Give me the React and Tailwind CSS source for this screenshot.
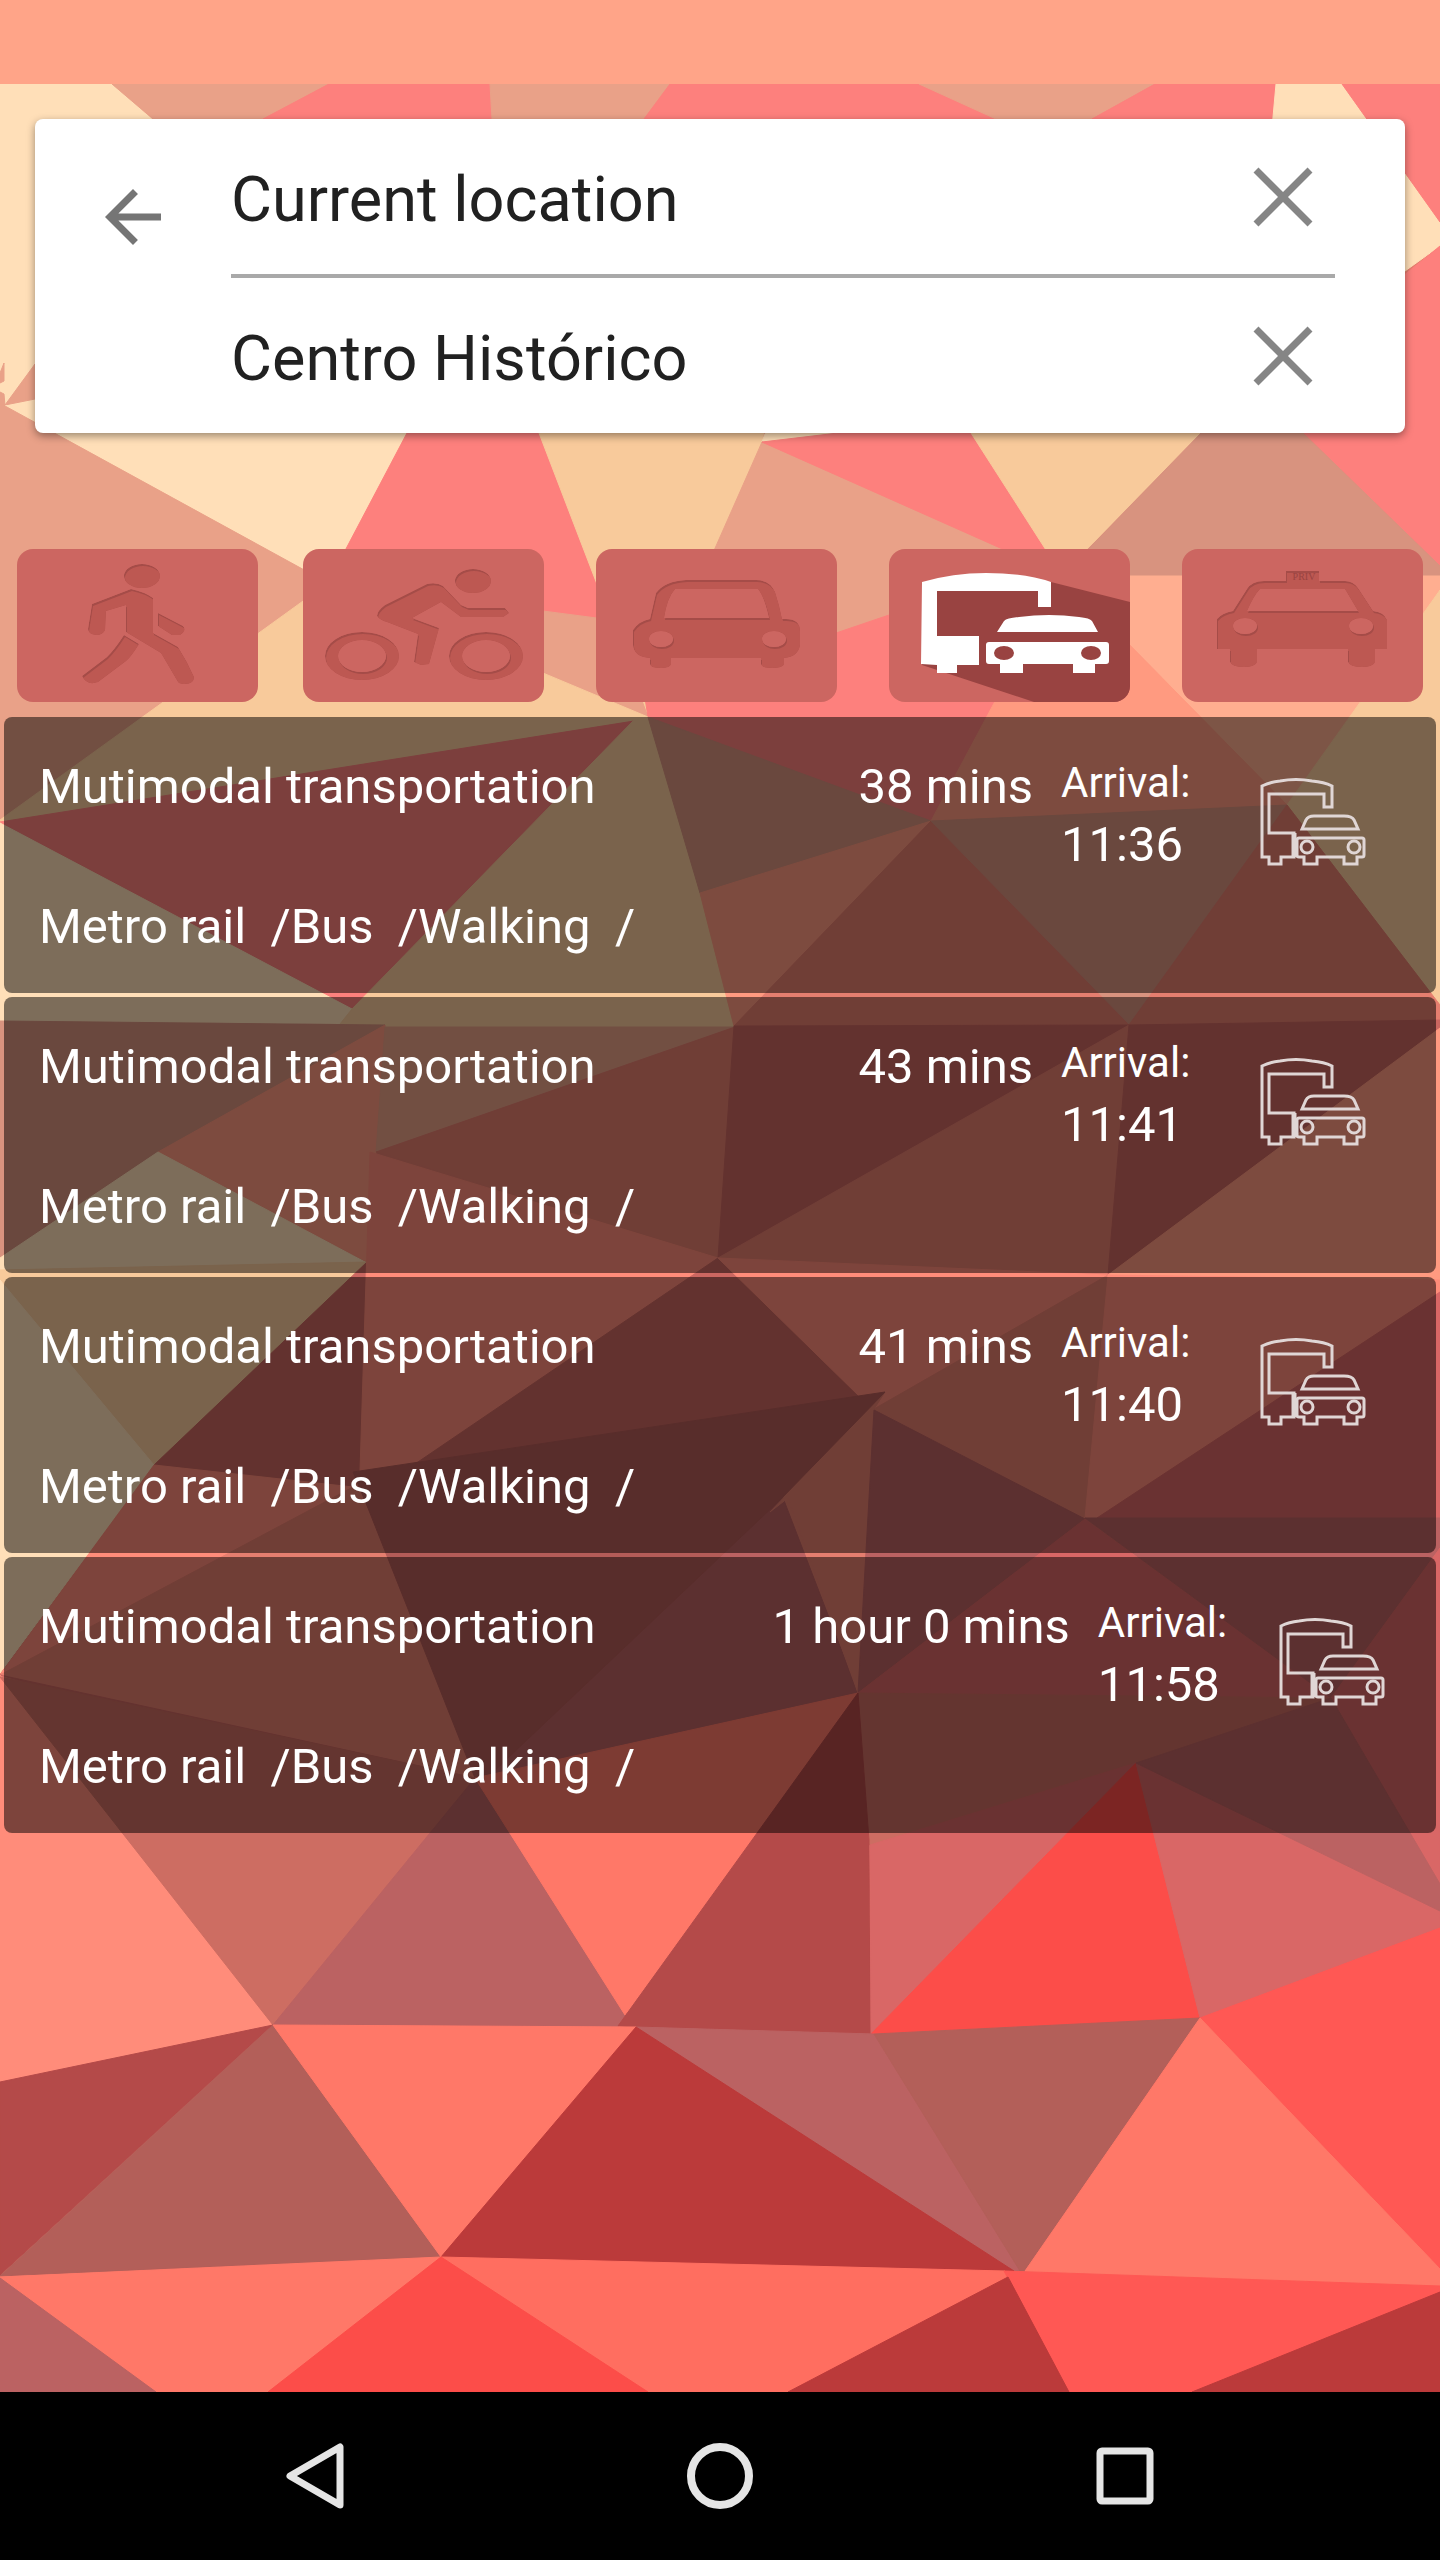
import { useId, useState } from "react"

// Each facet is a colour and its corner points on a 1440 x 2308 canvas that starts at y = 84
const facets = [
	["#ffdfb8", "0,84 112,84 340,280 240,433 0,433"],
	["#e9a188", "112,84 329,84 263,119 153,119"],
	["#fd807d", "329,84 490,84 492,119 263,119"],
	["#e9a188", "490,84 670,84 644,119 492,119"],
	["#fd807d", "670,84 919,84 996,119 644,119"],
	["#e9a188", "919,84 1155,84 1092,119 996,119"],
	["#fd807d", "1155,84 1276,84 1272,119 1092,119"],
	["#ffdfb8", "1276,84 1342,84 1440,222 1440,246 1405,271 1270,150"],
	["#fd807d", "1342,84 1440,84 1440,222"],
	["#fd807d", "1440,246 1440,566 1303,433 1300,360"],
	["#e9a188", "0,373 4,363 4,381 0,383"],
	["#e9a188", "0,392 4,394 5,406 0,420"],
	["#e9a188", "5,405 35,364 35,399"],
	["#ffdfb8", "5,406 60,400 420,400 407,433 328,583"],
	["#e9a188", "0,404 5,406 328,583 0,820"],
	["#fd807d", "407,433 420,400 530,400 539,433 612,620 328,583"],
	["#f8ca9b", "539,433 530,400 770,400 762,442 648,717"],
	["#ffdfb8", "762,442 770,420 860,425 838,433"],
	["#e9a188", "328,583 612,620 648,717"],
	["#f8ca9b", "328,583 648,717 634,721 0,823 0,820"],
	["#e9a188", "762,442 1007,550 1050,560 648,700"],
	["#fd807d", "762,442 838,433 960,410 971,433 1062,570 1007,551"],
	["#f8ca9b", "971,433 960,400 1210,400 1201,433 1062,575"],
	["#d8937f", "1201,433 1210,400 1280,400 1303,433 1440,566 1440,576 1062,576"],
	["#fd807d", "648,717 645,698 889,615 1062,576 931,821"],
	["#ffae90", "1062,576 1440,576 1440,590 1287,805"],
	["#ff9a80", "1062,576 1287,805 931,821"],
	["#f8ca9b", "1440,590 1287,805 1440,1005"],
	["#fd807d", "0,822 634,721 352,1009"],
	["#ffdfb8", "0,823 352,1009 340,1024 0,1021"],
	["#f8ca9b", "634,720 648,717 700,893 734,1027 385,1027 340,1024 352,1009"],
	["#d8937f", "648,717 931,821 700,893"],
	["#ff9a80", "931,821 700,893 734,1026"],
	["#e57e6f", "931,821 734,1026 1129,1025"],
	["#d8937f", "931,821 1287,805 1129,1024"],
	["#e57e6f", "1287,805 1440,1005 1440,1020 1129,1025"],
	["#d8937f", "0,1021 385,1025 158,1152 0,1260"],
	["#ff9a80", "385,1025 376,1152 367,1262 158,1152"],
	["#e9a188", "385,1027 734,1027 376,1152"],
	["#e57e6f", "735,1027 376,1152 718,1258"],
	["#cb6761", "734,1026 1129,1025 718,1258"],
	["#e57e6f", "1129,1025 718,1258 1108,1275"],
	["#cb6761", "1129,1025 1440,1020 1440,1028 1108,1275"],
	["#ff9a80", "1440,1028 1108,1275 1440,1280"],
	["#ffdfb8", "158,1152 365,1262 0,1270 0,1258"],
	["#f8ca9b", "0,1270 367,1262 154,1465 0,1280"],
	["#ffdfb8", "0,1280 154,1465 0,1673"],
	["#cb6761", "367,1262 154,1465 353,1487 360,1471"],
	["#ff8c7a", "370,1152 718,1258 415,1464 360,1471"],
	["#ff8c7a", "154,1465 353,1487 0,1675"],
	["#e57e6f", "0,1675 353,1487 368,1508 475,1778"],
	["#cb6761", "718,1258 415,1464 860,1397"],
	["#ff8c7a", "718,1258 1108,1275 874,1409 860,1397"],
	["#e57e6f", "1108,1275 874,1409 1085,1519"],
	["#ff8c7a", "1108,1275 1440,1280 1440,1292 1097,1518 1085,1518"],
	["#d96766", "1440,1292 1097,1518 1440,1518"],
	["#bb6262", "780,1490 858,1693 480,1778"],
	["#e57e6f", "885,1392 874,1409 858,1693 788,1498 770,1512"],
	["#b45c58", "353,1472 885,1392 780,1500 490,1775 475,1778 368,1508"],
	["#cb6761", "0,1675 475,1778 400,1790"],
	["#bb6262", "874,1410 858,1693 1085,1519"],
	["#d96766", "1085,1519 858,1693 1331,1698"],
	["#bb6262", "1085,1518 1440,1518 1440,1548 1331,1698"],
	["#d96766", "1440,1548 1331,1698 1440,1884"],
	["#cd6d62", "858,1693 1331,1698 1136,1763 870,1846"],
	["#ff8c7a", "0,1675 273,2025 0,2082"],
	["#cd6d62", "0,1677 475,1778 273,2025"],
	["#bb6262", "475,1778 273,2025 618,2027 627,2014"],
	["#ff7868", "475,1778 858,1693 625,2015"],
	["#b44a49", "858,1693 618,2026 636,2027 871,2034 869,1840"],
	["#d96766", "870,1845 871,2034 1136,1763"],
	["#fc4d49", "1136,1763 871,2034 1200,2018"],
	["#d96766", "1136,1763 1200,2018 1440,1928 1440,1911"],
	["#bb6262", "1136,1763 1331,1698 1440,1884 1440,1911"],
	["#b44a49", "0,2082 273,2025 0,2275"],
	["#b35f59", "273,2025 0,2276 441,2257"],
	["#ff7868", "273,2025 636,2027 441,2257"],
	["#bb6262", "636,2027 874,2034 1022,2271 1014,2271"],
	["#bb3a3a", "636,2027 441,2257 1014,2271"],
	["#b35f59", "874,2034 1200,2018 1025,2271 1020,2271"],
	["#ff5854", "1200,2018 1440,1928 1440,2269"],
	["#ff7868", "1200,2018 1025,2271 1440,2286 1440,2269"],
	["#ff7868", "0,2277 441,2257 268,2392 156,2392"],
	["#bb6262", "0,2278 156,2392 0,2392"],
	["#ff6e60", "441,2257 1005,2271 1008,2278 788,2392 648,2392"],
	["#fc4d49", "441,2257 268,2392 648,2392"],
	["#ff5854", "1004,2271 1440,2286 1440,2292 1192,2392 1069,2392"],
	["#bb3a3a", "1008,2277 788,2392 1069,2392"],
	["#bb3a3a", "1440,2292 1192,2392 1440,2392"],
]

const routes = [
	{ id: 1, duration: "38 mins", arrival: "11:36" },
	{ id: 2, duration: "43 mins", arrival: "11:41" },
	{ id: 3, duration: "41 mins", arrival: "11:40" },
	{ id: 4, duration: "1 hour 0 mins", arrival: "11:58" },
]

function Backdrop() {
	return (
		<svg
			className="absolute inset-0 w-full h-full"
			viewBox="0 84 1440 2308"
			preserveAspectRatio="none"
			aria-hidden="true">
			<rect y="84" width="1440" height="2308" fill="#e57e6f" />
			{facets.map(([color, points]) => (
				<polygon key={points} points={points} fill={color} stroke={color} />
			))}
		</svg>
	)
}

// Pressed-in glyph: dark along its upper left edges
function Embossed({ d, children }) {
	const id = useId()
	return (
		<svg className="w-full h-full" viewBox="0 0 241 153" aria-hidden="true">
			<clipPath id={id}>
				<path d={d} clipRule="evenodd" />
			</clipPath>
			<g clipPath={`url(#${id})`}>
				<path d={d} fill="#a54c48" fillRule="evenodd" />
				<path d={d} fill="#bd5852" fillRule="evenodd" transform="translate(1 2)" />
			</g>
			{children}
		</svg>
	)
}

function WalkIcon() {
	return (
		<Embossed d="M107 27a18 12 0 1 0 36 0a18 12 0 1 0-36 0zM114 40Q128 43 136 49V84L161 98Q170 112 177 128Q177 135 168 135Q163 135 161 133L144 104L109 83V56L89 62L88 81Q86 86 79 86Q71 85 71 80L75 55zM141 64L166 77Q170 81 163 86H155L141 77zM107 86L122 95Q114 108 109 112L81 133Q70 137 65 127L90 108Q98 100 107 86z" />
	)
}

function BikeIcon() {
	return (
		<Embossed d="M152 32a18 12 0 1 0 36 0a18 12 0 1 0-36 0zM22 107a37 24 0 1 0 74 0a37 24 0 1 0-74 0zM35 107a24 16 0 1 1 48 0a24 16 0 1 1-48 0zM146 107a37 24 0 1 0 74 0a37 24 0 1 0-74 0zM159 107a24 16 0 1 1 48 0a24 16 0 1 1-48 0zM124 35Q134 33 140 37L158 56L165 59H202L206 64L200 68H158L138 53L109 69L136 79L126 115L118 116L111 113L115 85L84 73Q77 71 74 67Q74 62 82 56z" />
	)
}

function CarIcon() {
	return (
		<Embossed d="M90 31H160Q174 31 179 43Q183 55 186 70H190Q204 70 204 82V96Q202 108 188 109V115Q187 119 176 119Q165 119 165 115V109H75V115Q74 119 65 119Q54 119 54 115V109Q38 108 37 96V81Q43 72 54 70L60 44Q69 32 90 31zM79 40H162Q168 47 173 69H68Q71 49 79 40zM53 90a12 8 0 1 0 24 0a12 8 0 1 0-24 0zM166 90a12 8 0 1 0 24 0a12 8 0 1 0-24 0z" />
	)
}

function TaxiIcon() {
	return (
		<Embossed d="M104 22H137V32H163Q171 32 176 39L191 62Q202 63 205 71V100H193V113Q191 118 180 118Q168 118 166 113V100H75V113Q73 118 62 118Q50 118 48 113V100H35V70Q40 64 51 62L65 40Q70 32 82 32H104zM78 40H163L176 62H65Q72 46 78 40zM51 77a12 8 0 1 0 24 0a12 8 0 1 0-24 0zM167 77a12 8 0 1 0 24 0a12 8 0 1 0-24 0z">
			<text x="122" y="31" textAnchor="middle" fontSize="10" fontFamily="Liberation Serif, serif" fill="#994341">
				PRIV
			</text>
		</Embossed>
	)
}

function TransitIcon() {
	return (
		<svg className="w-full h-full" viewBox="0 0 241 153" aria-hidden="true">
			<path fill="#994341" d="M162 33L241 53V153H145L33 116L48 42z" />
			<g fill="#fff">
				<path d="M33 33Q64 24 97 24Q136 24 162 33V58H149V42H48V87H90V116H68V124H48V116L32 115z" />
				<path d="M108 83L115 72Q118 69 130 68Q160 64 190 68Q201 69 203 72L209 83z" />
				<path
					fillRule="evenodd"
					d="M100 93H217Q220 93 220 96V112Q220 115 217 115H206V124H184V115H134V124H111V115H100Q97 115 97 112V96Q97 93 100 93zM105 104a10 7 0 1 0 20 0a10 7 0 1 0-20 0zM192 104a10 7 0 1 0 20 0a10 7 0 1 0-20 0z"
				/>
			</g>
		</svg>
	)
}

function TransitOutline() {
	return (
		<svg
			className="w-[106px] h-[88px] text-[#e0d6d5]"
			viewBox="0 0 106 88"
			fill="none"
			stroke="currentColor"
			strokeWidth="3"
			aria-hidden="true">
			<path d="M2 8Q10 4 20 3Q36 0 52 3Q64 4 72 8V29H64V16H9V55H34V79H21V86H9V79H2z" />
			<path d="M42 51L46 42Q48 38 54 38H84Q92 38 94 42L98 51z" />
			<path d="M39 60H102Q104 60 104 62V77Q104 79 102 79H97V86H84V79H57V86H44V79H39Q37 79 37 77V62Q37 60 39 60z" />
			<path d="M34 55V79" strokeWidth="5" />
			<circle cx="47" cy="69" r="6" />
			<circle cx="94" cy="69" r="6" />
		</svg>
	)
}

const modes = [
	{ name: "Walking", Icon: WalkIcon },
	{ name: "Bicycle", Icon: BikeIcon },
	{ name: "Car", Icon: CarIcon },
	{ name: "Transit", Icon: TransitIcon },
	{ name: "Private taxi", Icon: TaxiIcon },
]

function PlaceField({ label, value, onChange }) {
	return (
		<div className="flex h-[155px]">
			<input
				type="text"
				aria-label={label}
				value={value}
				onChange={(e) => onChange(e.target.value)}
				className="flex-1 min-w-0 pt-2 text-[63px] text-[#212121] bg-transparent focus:outline-none"
			/>
			<button
				onClick={() => onChange("")}
				aria-label={`Clear ${label}`}
				className="w-[104px] flex items-center justify-center">
				<svg className="w-[60px] h-[60px]" viewBox="0 0 60 60" aria-hidden="true">
					<path d="M3 3L57 57M57 3L3 57" stroke="#858585" strokeWidth="7" />
				</svg>
			</button>
		</div>
	)
}

function RouteCard({ duration, arrival }) {
	return (
		<li>
			<a
				href="#route"
				className="relative block h-[276px] pl-[35px] rounded-lg bg-black/51 text-white text-[49px] leading-[56px]">
				<div className="flex pt-[42px]">
					<span className="grow-[7]">Mutimodal transportation</span>
					<span>{duration}</span>
					<div className="ml-[28px]">
						<div className="text-[42px] leading-[48px]">Arrival:</div>
						<div className="mt-[10px]">{arrival}</div>
					</div>
					<div className="grow-[3] basis-[133px] flex justify-center pt-[19px]">
						<TransitOutline />
					</div>
				</div>
				<div className="mt-[26px] whitespace-pre">{"Metro rail  /Bus  /Walking  /"}</div>
			</a>
		</li>
	)
}

function App() {
	const [from, setFrom] = useState("Current location")
	const [to, setTo] = useState("Centro Histórico")
	const [mode, setMode] = useState("Transit")

	return (
		<div className="min-h-screen flex flex-col font-[Roboto,sans-serif]">
			<header className="h-[84px] bg-[#ffa488]" />

			<main className="relative flex-1">
				<Backdrop />
				<div className="relative pt-[35px]">
					<section className="flex mx-[35px] bg-white rounded-lg shadow-[0_3px_8px_rgba(0,0,0,0.4)]">
						<div className="w-[196px] flex justify-center items-start pt-14">
							<button aria-label="Back">
								<svg className="w-[84px] h-[84px]" viewBox="0 0 24 24" fill="#757575" aria-hidden="true">
									<path d="M20 11H7.830l5.590-5.590L12 4l-8 8 8 8 1.410-1.410L7.830 13H20v-2z" />
								</svg>
							</button>
						</div>
						<div className="flex-1 min-w-0 mr-[70px]">
							<PlaceField label="Origin" value={from} onChange={setFrom} />
							<hr className="border-0 h-1 bg-[#a9a9a9]" />
							<PlaceField label="Destination" value={to} onChange={setTo} />
						</div>
					</section>

					<div className="mt-[116px] pl-[17px] grid grid-cols-[286fr_293fr_293fr_293fr_258fr]">
						{modes.map(({ name, Icon }) => (
							<button
								key={name}
								aria-label={name}
								aria-pressed={mode === name}
								onClick={() => setMode(name)}
								className="w-[241px] h-[153px] rounded-2xl overflow-hidden bg-[#cc6661]">
								<Icon />
							</button>
						))}
					</div>

					<ul className="mt-[15px] mx-1 flex flex-col gap-1">
						{routes.map((route) => (
							<RouteCard key={route.id} {...route} />
						))}
					</ul>
				</div>
			</main>

			<nav className="h-[168px] px-28 bg-black grid grid-cols-3 text-[#e5e5e5]">
				<button aria-label="Back" className="flex items-center justify-center">
					<svg className="w-[66px] h-[66px]" viewBox="0 0 66 66" fill="none" stroke="currentColor" strokeWidth="7" strokeLinejoin="round" aria-hidden="true">
						<path d="M58 4V62L8 33z" />
					</svg>
				</button>
				<button aria-label="Home" className="flex items-center justify-center">
					<svg className="w-[66px] h-[66px]" viewBox="0 0 66 66" fill="none" stroke="currentColor" strokeWidth="8" aria-hidden="true">
						<circle cx="33" cy="33" r="29" />
					</svg>
				</button>
				<button aria-label="Recent apps" className="flex items-center justify-center">
					<svg className="w-[58px] h-[58px]" viewBox="0 0 58 58" fill="none" stroke="currentColor" strokeWidth="7" aria-hidden="true">
						<rect x="4" y="4" width="50" height="50" rx="2" />
					</svg>
				</button>
			</nav>
		</div>
	)
}

export default App
